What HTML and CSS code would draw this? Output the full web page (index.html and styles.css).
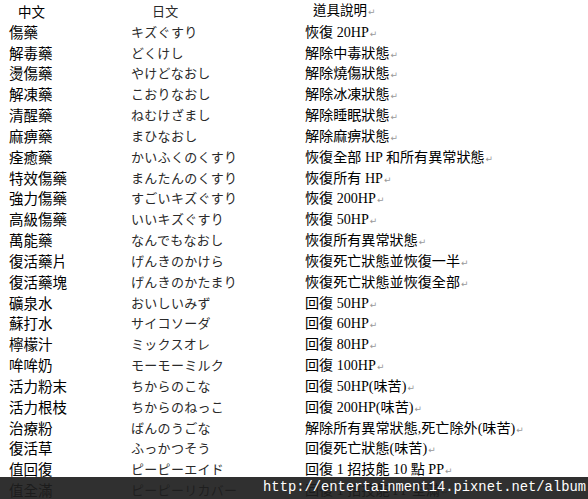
FILE: index.html
```html
<!DOCTYPE html>
<html lang="zh-Hant">
<head>
  <meta charset="UTF-8" />
  <title>道具表</title>
  <link rel="stylesheet" href="styles.css">
</head>
<body>
  <div class="sheet">
    <div class="row head">
      <div class="zh">中文</div>
      <div class="ja">日文</div>
      <div class="desc">道具說明<span class="mark">↵</span></div>
    </div>
    <div class="row"><div class="zh">傷藥</div><div class="ja">キズぐすり</div><div class="desc">恢復 20HP<span class="mark">↵</span></div></div>
    <div class="row"><div class="zh">解毒藥</div><div class="ja">どくけし</div><div class="desc">解除中毒狀態<span class="mark">↵</span></div></div>
    <div class="row"><div class="zh">燙傷藥</div><div class="ja">やけどなおし</div><div class="desc">解除燒傷狀態<span class="mark">↵</span></div></div>
    <div class="row"><div class="zh">解凍藥</div><div class="ja">こおりなおし</div><div class="desc">解除冰凍狀態<span class="mark">↵</span></div></div>
    <div class="row"><div class="zh">清醒藥</div><div class="ja">ねむけざまし</div><div class="desc">解除睡眠狀態<span class="mark">↵</span></div></div>
    <div class="row"><div class="zh">麻痹藥</div><div class="ja">まひなおし</div><div class="desc">解除麻痹狀態<span class="mark">↵</span></div></div>
    <div class="row"><div class="zh">痊癒藥</div><div class="ja">かいふくのくすり</div><div class="desc">恢復全部 HP 和所有異常狀態<span class="mark">↵</span></div></div>
    <div class="row"><div class="zh">特效傷藥</div><div class="ja">まんたんのくすり</div><div class="desc">恢復所有 HP<span class="mark">↵</span></div></div>
    <div class="row"><div class="zh">強力傷藥</div><div class="ja">すごいキズぐすり</div><div class="desc">恢復 200HP<span class="mark">↵</span></div></div>
    <div class="row"><div class="zh">高級傷藥</div><div class="ja">いいキズぐすり</div><div class="desc">恢復 50HP<span class="mark">↵</span></div></div>
    <div class="row"><div class="zh">萬能藥</div><div class="ja">なんでもなおし</div><div class="desc">恢復所有異常狀態<span class="mark">↵</span></div></div>
    <div class="row"><div class="zh">復活藥片</div><div class="ja">げんきのかけら</div><div class="desc">恢復死亡狀態並恢復一半<span class="mark">↵</span></div></div>
    <div class="row"><div class="zh">復活藥塊</div><div class="ja">げんきのかたまり</div><div class="desc">恢復死亡狀態並恢復全部<span class="mark">↵</span></div></div>
    <div class="row"><div class="zh">礦泉水</div><div class="ja">おいしいみず</div><div class="desc">回復 50HP<span class="mark">↵</span></div></div>
    <div class="row"><div class="zh">蘇打水</div><div class="ja">サイコソーダ</div><div class="desc">回復 60HP<span class="mark">↵</span></div></div>
    <div class="row"><div class="zh">檸檬汁</div><div class="ja">ミックスオレ</div><div class="desc">回復 80HP<span class="mark">↵</span></div></div>
    <div class="row"><div class="zh">哞哞奶</div><div class="ja">モーモーミルク</div><div class="desc">回復 100HP<span class="mark">↵</span></div></div>
    <div class="row"><div class="zh">活力粉末</div><div class="ja">ちからのこな</div><div class="desc">回復 50HP(味苦)<span class="mark">↵</span></div></div>
    <div class="row"><div class="zh">活力根枝</div><div class="ja">ちからのねっこ</div><div class="desc">回復 200HP(味苦)<span class="mark">↵</span></div></div>
    <div class="row"><div class="zh">治療粉</div><div class="ja">ばんのうごな</div><div class="desc">解除所有異常狀態,死亡除外(味苦)<span class="mark">↵</span></div></div>
    <div class="row"><div class="zh">復活草</div><div class="ja">ふっかつそう</div><div class="desc">回復死亡狀態(味苦)<span class="mark">↵</span></div></div>
    <div class="row"><div class="zh">值回復</div><div class="ja">ピーピーエイド</div><div class="desc">回復 1 招技能 10 點 PP<span class="mark">↵</span></div></div>
    <div class="row"><div class="zh">值全滿</div><div class="ja">ピーピーリカバー</div><div class="desc">回復 1 招技能 PP 全滿<span class="mark">↵</span></div></div>
  </div>

  <div class="watermark">http://entertainment14.pixnet.net/album</div>
</body>
</html>
```

FILE: styles.css
```css
body {
  margin: 0;
  padding: 0;
  background-color: #fff;
  color: #000;
  font-family: "Noto Sans CJK TC", sans-serif;
  height: 499px;
  overflow: hidden;
  position: relative;
}
.sheet {
  padding: 1px 0 0 9px;
}
.row {
  display: grid;
  grid-template-columns: 122px 174px 1fr;
  height: 20.83px;
  line-height: 20.83px;
  font-size: 14.5px;
  white-space: nowrap;
}
.ja {
  font-family: "Noto Sans CJK JP", sans-serif;
  font-size: 13px;
  color: #2a2a2a;
  letter-spacing: 0.3px;
}
.desc {
  font-family: "Liberation Serif", "Noto Sans CJK TC", serif;
  font-size: 14.1px;
}
.head .zh {
  padding-left: 9px;
  font-size: 13.5px;
}
.head .ja {
  padding-left: 21px;
}
.head .desc {
  padding-left: 8px;
  font-size: 13.5px;
}
.mark {
  font-family: "DejaVu Sans", sans-serif;
  font-size: 9px;
  color: #999;
  margin-left: 1px;
}
.watermark {
  position: absolute;
  left: 0;
  right: 0;
  bottom: 0;
  height: 22px;
  line-height: 22px;
  background-color: rgba(30, 30, 30, 0.92);
  color: #fff;
  font-family: "Liberation Mono", monospace;
  font-size: 13.8px;
  text-align: right;
  padding-right: 2px;
}
```
